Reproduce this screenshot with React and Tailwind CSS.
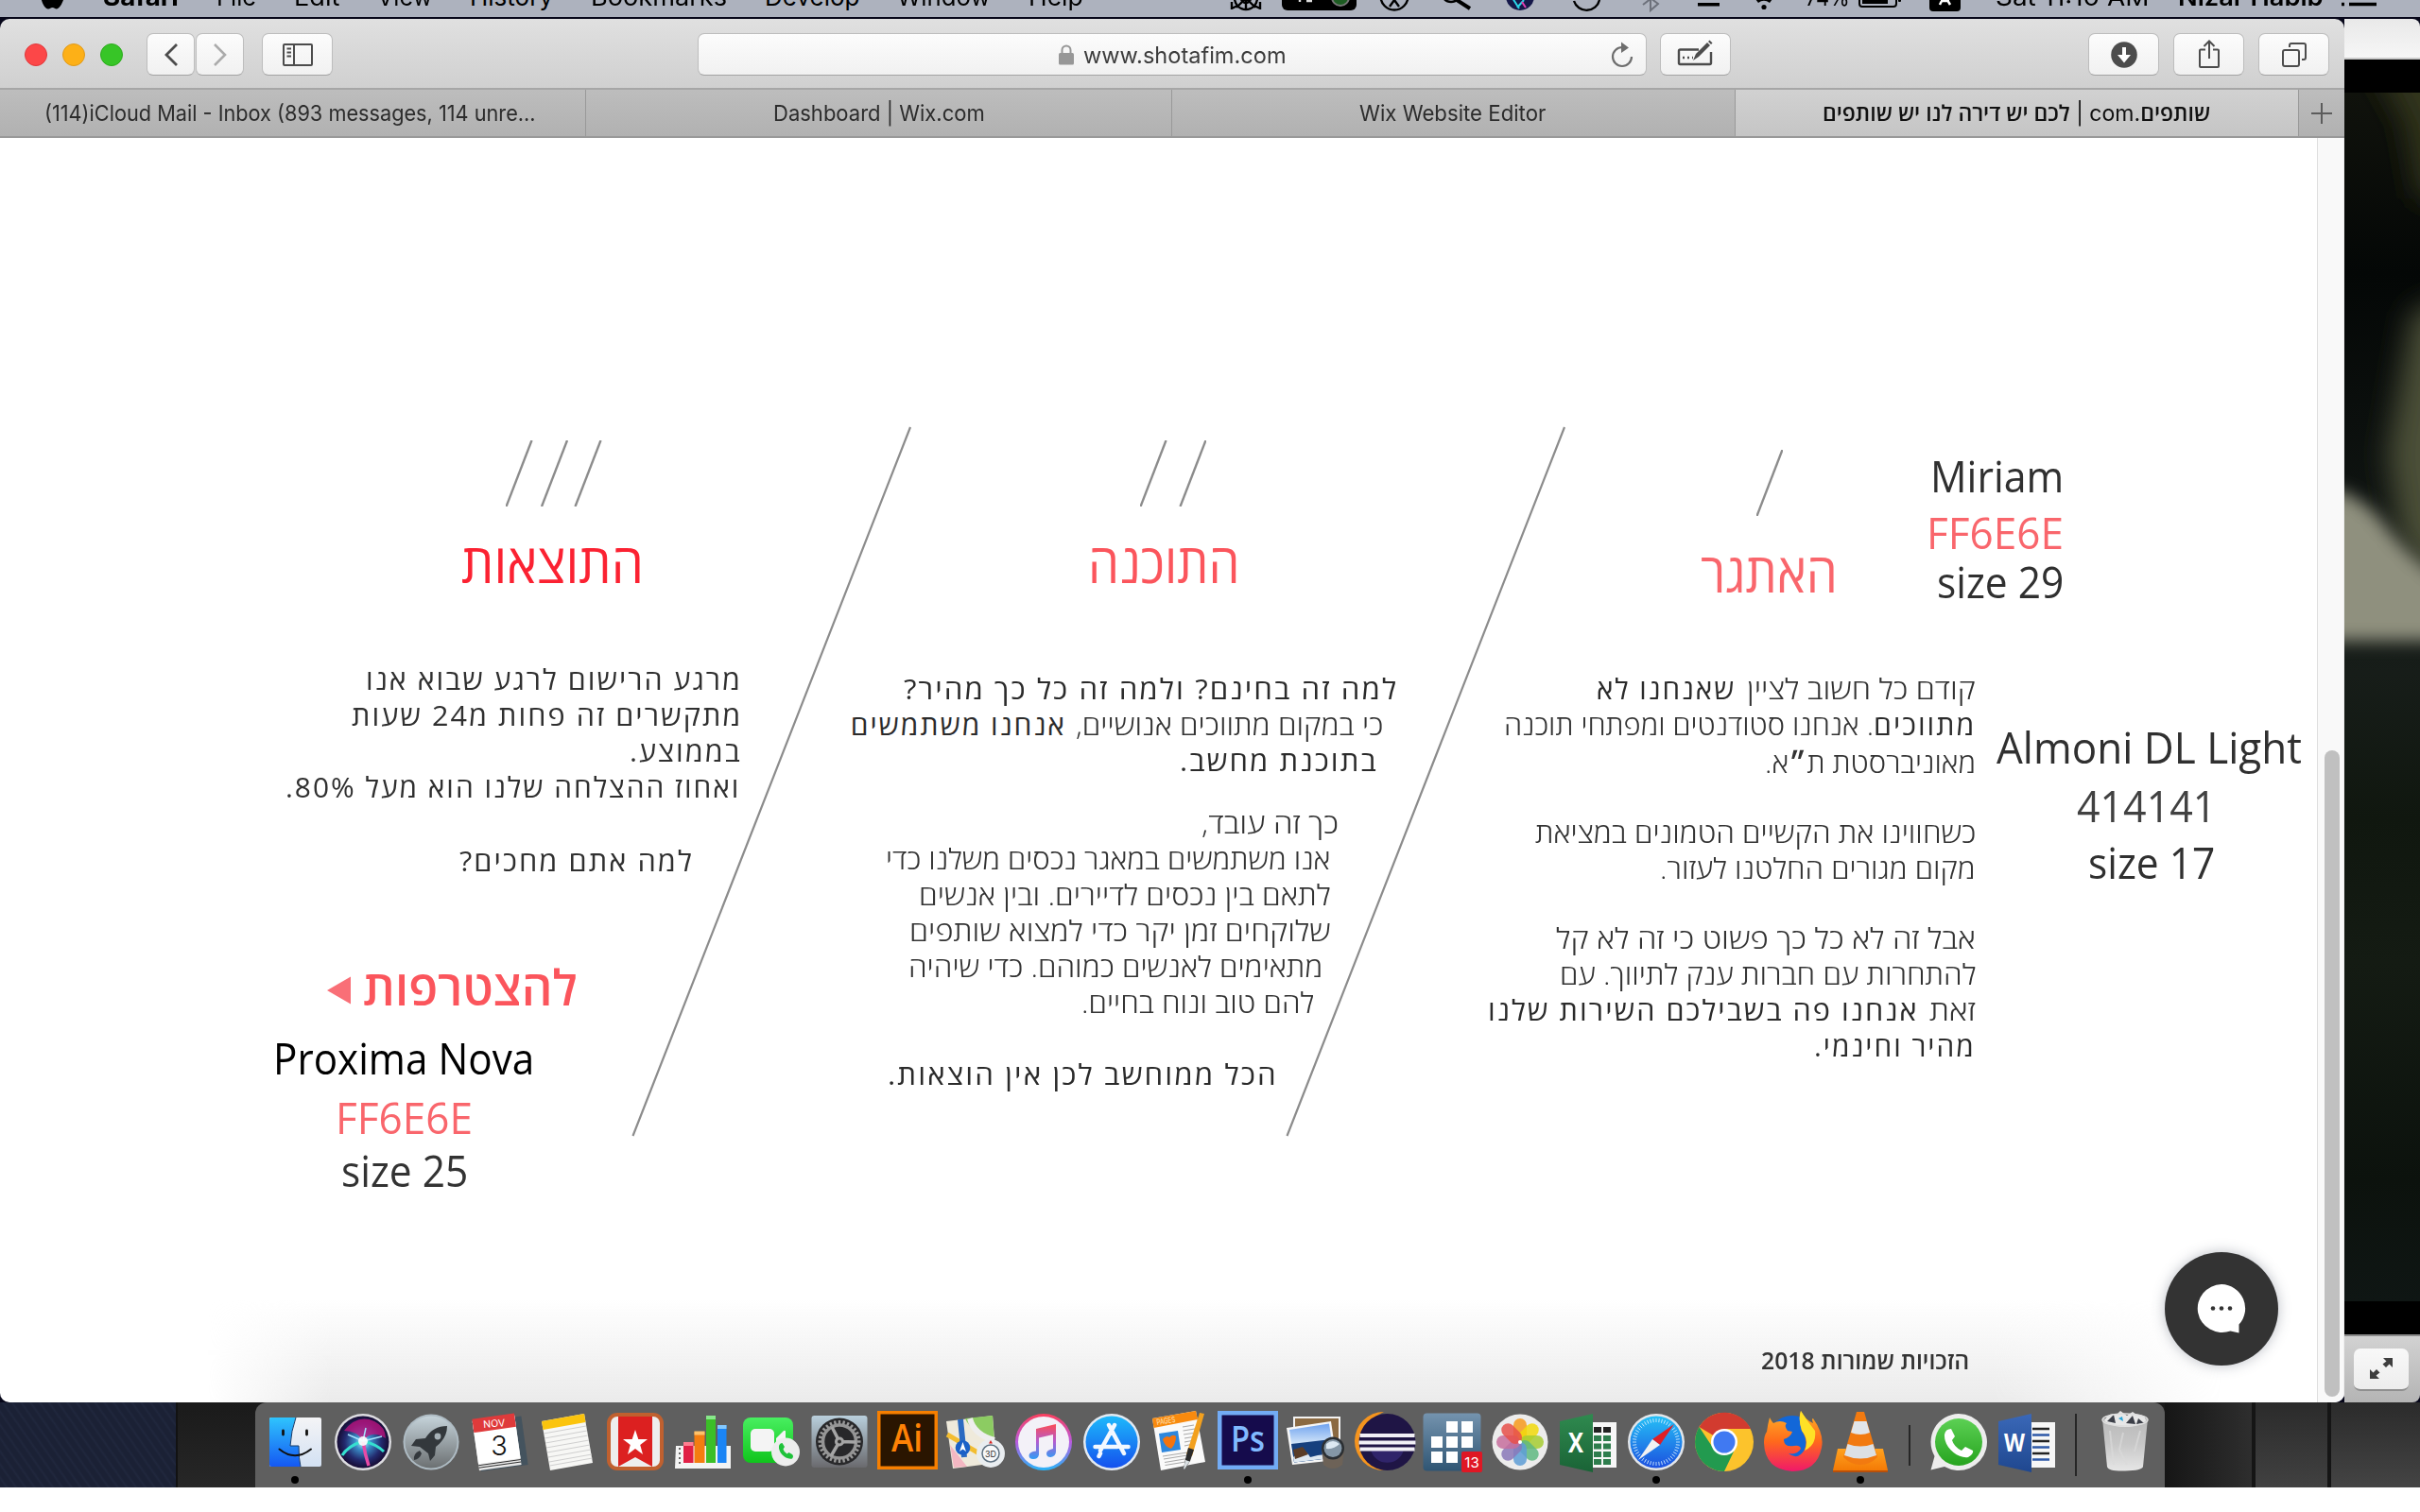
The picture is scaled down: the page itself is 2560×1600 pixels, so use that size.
import React, { useLayoutEffect, useRef } from "react";

/* Text that is stretched or squeezed to fill the width of its box. */
function Fit({ className = "", rtl = false, children }) {
  const box = useRef(null);
  const inner = useRef(null);
  useLayoutEffect(() => {
    const fit = () => {
      const b = box.current;
      const s = inner.current;
      if (!b || !s || !s.offsetWidth) return;
      s.style.transform = `scaleX(${b.clientWidth / s.offsetWidth})`;
    };
    fit();
    document.fonts?.ready.then(fit);
  }, []);
  return (
    <div ref={box} dir={rtl ? "rtl" : "ltr"} className={`shrink-0 whitespace-nowrap ${className}`}>
      <span ref={inner} className={`inline-block ${rtl ? "origin-right" : "origin-left"}`}>
        {children}
      </span>
    </div>
  );
}

const UI = "font-['Inter',sans-serif]";
const HE = "font-['Open_Sans','Liberation_Sans',sans-serif]";

/* ---------- menu bar ---------- */
function MenuBar() {
  const item = "-mt-[15px] h-6 text-[26px] leading-6 text-black";
  return (
    <div className={`flex h-[18px] items-start overflow-hidden bg-[#adb2be] ${UI}`}>
      <svg className="ml-[43px] h-[18px] w-6 shrink-0" viewBox="0 0 24 18">
        <path d="M0 -8C0 2 4 9 8 9.500C10 9.500 10.500 8 12.500 8S15 9.500 17 9.500C20 9 22.500 4 24 0L22 -8Z" />
      </svg>
      <div className="ml-[42px] flex gap-10">
        <Fit className={`${item} w-[80px] font-bold`}>Safari</Fit>
        <Fit className={`${item} w-[42px]`}>File</Fit>
        <Fit className={`${item} w-[48px]`}>Edit</Fit>
        <Fit className={`${item} w-[58px]`}>View</Fit>
        <Fit className={`${item} w-[88px]`}>History</Fit>
        <Fit className={`${item} w-[144px]`}>Bookmarks</Fit>
        <Fit className={`${item} w-[100px]`}>Develop</Fit>
        <Fit className={`${item} w-[99px]`}>Window</Fit>
        <Fit className={`${item} w-[58px]`}>Help</Fit>
      </div>
      <svg className="ml-[154px] h-[18px] w-[534px] shrink-0" viewBox="1300 0 534 18" fill="none" stroke="#000" strokeWidth="2.400">
        <circle cx="1318" cy="-2" r="12" />
        <circle cx="1318" cy="-2" r="5" />
        <path d="M1318 -2L1308 8M1318 -2L1328 8M1318 -2V10M1303 2V10M1333 2V10M1303 9L1309 6M1333 9L1327 6" />
        <rect x="1356" y="-20" width="79" height="31" rx="6" fill="#000" stroke="none" />
        <circle cx="1418" cy="-3" r="9" fill="#1d5c22" stroke="#777" strokeWidth="2" />
        <path d="M1375 -3V2M1382 1H1388" stroke="#ddd" />
        <circle cx="1475" cy="-4" r="14.500" />
        <path d="M1475 -4V0L1470 7M1475 0L1480 7" />
        <path d="M1538 -2L1555 9" strokeWidth="4" />
        <circle cx="1535" cy="-8" r="10" />
        <circle cx="1608" cy="-4" r="15" fill="#15184a" stroke="none" />
        <path d="M1600 -2L1607 9M1612 0L1605 8" stroke="#2ad5e8" strokeWidth="2" />
        <path d="M1610 2L1614 8" stroke="#e33fb0" strokeWidth="2" />
        <path d="M1665 1A14 14 0 0 0 1692 0" />
        <path d="M1678 -3H1684" strokeWidth="2" />
        <path d="M1738 5L1755 -8M1738 -8L1754 4L1746 11V-10" stroke="#6d717b" strokeWidth="2" />
        <rect x="1796" y="3" width="23" height="3.500" fill="#000" stroke="none" />
        <path d="M1795 -1H1820L1808 -12Z" fill="#000" stroke="none" />
      </svg>
      <svg className="h-[18px] w-[76px] shrink-0" viewBox="1834 0 76 18">
        <circle cx="1866" cy="7.500" r="2.600" />
        <path d="M1857 -1A13 13 0 0 1 1875 -1L1872 3A10 10 0 0 0 1860 3Z" />
      </svg>
      <Fit className={`${item} w-[47px]`}>74%</Fit>
      <svg className="h-[18px] w-[154px] shrink-0" viewBox="1957 0 154 18">
        <rect x="1967" y="-10" width="39" height="17" rx="3" fill="none" stroke="#000" strokeWidth="2" />
        <rect x="1970" y="-8" width="27" height="12" />
        <rect x="2008" y="-6" width="3" height="8" rx="1" />
        <rect x="2041" y="-18" width="33" height="30" rx="4" />
        <path d="M2052 5L2057 -5L2063 5M2053 1H2062" stroke="#fff" strokeWidth="2.500" fill="none" />
      </svg>
      <Fit className={`${item} w-[162px]`}>Sat 11:10 AM</Fit>
      <Fit className={`${item} ml-[31px] w-[154px] font-semibold`}>Nizar Habib</Fit>
      <svg className="ml-[19px] h-[18px] w-[38px] shrink-0" viewBox="0 0 38 18">
        <path d="M0 4.500H3M8 4.500H37M0 -3H3M8 -3H37" stroke="#000" strokeWidth="3.500" />
      </svg>
    </div>
  );
}

/* ---------- browser chrome ---------- */
const BTN =
  "flex h-[45px] items-center justify-center rounded-[7px] border border-[#bdbdbd] border-b-[#a3a3a3] bg-gradient-to-b from-[#fcfcfc] to-[#f1f1f1]";

function Toolbar() {
  return (
    <div className="flex h-[75px] items-start rounded-t-[10px] border-b-2 border-[#a6a6a6] bg-gradient-to-b from-[#e0e0e0] to-[#d0d0d0] pt-[15px]">
      <div className="ml-[26px] mt-[11px] flex gap-4">
        <div className="size-6 rounded-full border border-[#e0383b] bg-[#fc4748]" />
        <div className="size-6 rounded-full border border-[#e09a1a] bg-[#fdb017]" />
        <div className="size-6 rounded-full border border-[#2bab1c] bg-[#37c527]" />
      </div>
      <div className={`ml-[25px] w-[51px] ${BTN}`}>
        <svg className="h-6 w-4" viewBox="0 0 16 24" fill="none" stroke="#4c4c4c" strokeWidth="2.800">
          <path d="M14 1L3 12L14 23" />
        </svg>
      </div>
      <div className={`ml-px w-[51px] ${BTN}`}>
        <svg className="h-6 w-4" viewBox="0 0 16 24" fill="none" stroke="#ababab" strokeWidth="2.600">
          <path d="M2 1L13 12L2 23" />
        </svg>
      </div>
      <div className={`ml-[19px] w-[75px] ${BTN}`}>
        <svg className="h-6 w-8" viewBox="0 0 32 24" fill="none" stroke="#4c4c4c" strokeWidth="2">
          <rect x="1" y="1" width="30" height="22" rx="1" />
          <path d="M12 1V23M4.500 5.500H9M4.500 9.500H9M4.500 13.500H9" />
        </svg>
      </div>
      <div className={`ml-[386px] w-[1004px] ${BTN} !justify-start`}>
        <svg className="ml-[380px] h-[22px] w-[18px]" viewBox="0 0 18 22">
          <rect x="1" y="9" width="16" height="12.500" rx="1.500" fill="#979797" />
          <path d="M4.500 10V6A4.500 4.500 0 0 1 13.500 6V10" fill="none" stroke="#979797" strokeWidth="2" />
        </svg>
        <Fit className={`ml-[9px] mt-[2px] w-[215px] text-[24px] leading-8 text-[#3c3c3c] ${UI}`}>www.shotafim.com</Fit>
        <svg className="ml-[343px] h-7 w-6" viewBox="0 0 24 28" fill="none" stroke="#6e6e6e" strokeWidth="2.200">
          <path d="M12 6A10 10 0 1 0 22 16" />
          <path d="M11 0.500L19 6.500L11 12Z" fill="#6e6e6e" stroke="none" />
        </svg>
      </div>
      <div className={`ml-[14px] w-[75px] ${BTN}`}>
        <svg className="-mt-1 h-7 w-10" viewBox="0 0 40 28" fill="none" stroke="#4c4c4c" strokeWidth="2.400">
          <path d="M23 10.500H3.500Q2 10.500 2 12V24.500Q2 26 3.500 26H34.500Q36 26 36 24.500V13" />
          <path d="M6 19H8M11 19H13M16 19H17" />
          <path d="M17 22L20 15L32 3L35 6L23 18Z" fill="#4c4c4c" stroke="none" />
          <path d="M33 2L34.500 0.500L37.500 3.500L36 5Z" fill="#4c4c4c" stroke="none" />
        </svg>
      </div>
      <div className="ml-auto mr-4 flex gap-[15px]">
        <div className={`w-[75px] ${BTN}`}>
          <svg className="size-7" viewBox="0 0 28 28">
            <circle cx="14" cy="14" r="13.800" fill="#4c4c4c" />
            <path d="M12 6H16V14H21L14 22.500L7 14H12Z" fill="#fff" />
          </svg>
        </div>
        <div className={`w-[75px] ${BTN}`}>
          <svg className="-mt-0.5 h-[30px] w-6" viewBox="0 0 24 30" fill="none" stroke="#4c4c4c" strokeWidth="2">
            <path d="M8 10.500H3Q2 10.500 2 11.500V28Q2 29 3 29H21Q22 29 22 28V11.500Q22 10.500 21 10.500H16M12 20V2M6.500 7L12 1.500L17.500 7" />
          </svg>
        </div>
        <div className={`w-[75px] ${BTN}`}>
          <svg className="h-[26px] w-7" viewBox="0 0 28 26" fill="none" stroke="#4c4c4c" strokeWidth="2">
            <rect x="2" y="8" width="17" height="17" rx="2" />
            <path d="M9 5V3Q9 1 11 1H24Q26 1 26 3V16Q26 18 24 18H22" />
          </svg>
        </div>
      </div>
    </div>
  );
}

function Tabs() {
  const tab = "flex h-[51px] items-center justify-center border-b-2 border-b-[#999] bg-gradient-to-b from-[#bdbdbd] to-[#b1b1b1] text-[23px] leading-8 text-[#2c2c2c]";
  return (
    <div className={`flex ${UI}`}>
      <div className={`${tab} w-[620px] border-r border-r-[#999] pr-1.5`}>
        <Fit className="w-[520px]">(114)iCloud Mail - Inbox (893 messages, 114 unre...</Fit>
      </div>
      <div className={`${tab} w-[620px] border-r border-r-[#999]`}>
        <Fit className="w-[224px]">Dashboard | Wix.com</Fit>
      </div>
      <div className={`${tab} w-[595px] pr-0.5`}>
        <Fit className="w-[197px]">Wix Website Editor</Fit>
      </div>
      <div className="flex h-[51px] w-[597px] items-center justify-center border-x border-b-2 border-x-[#999] border-b-[#999] bg-gradient-to-b from-[#d1d1d1] to-[#c5c5c5] text-[23px] leading-8 text-[#111]">
        <Fit rtl className="w-[410px] font-['Open_Sans',sans-serif] font-semibold">
          שותפים<span className="font-['Inter',sans-serif] font-normal">.com | </span>לכם יש דירה לנו יש שותפים
        </Fit>
      </div>
      <div className={`${tab} w-[48px]`}>
        <svg className="size-[22px]" viewBox="0 0 22 22" stroke="#5c5c5c" strokeWidth="2">
          <path d="M11 0V22M0 11H22" />
        </svg>
      </div>
    </div>
  );
}

/* ---------- page ---------- */
const BODY = `h-[38px] leading-[38px] ${HE}`;
const LIGHT = "text-[30px] font-light text-[#333]";
const REG = "text-[30px] font-normal tracking-[2px] text-[#303030]";
const BOLD = "text-[30px] font-medium tracking-[2px] text-[#2b2b2b]";
const HEAD = `h-[60px] text-[58px] font-medium leading-[60px] ${HE}`;
const NOTE = "font-['Open_Sans',sans-serif] text-[45px] font-normal leading-[52px] h-[52px]";

function Slashes({ className, xs, w }) {
  return (
    <svg className={`h-[70px] shrink-0 ${className}`} viewBox={`0 0 ${w} 70`} stroke="#8c8c8c" strokeWidth="2.400">
      {xs.map((x) => (
        <line key={x} x1={x + 27} y1="0" x2={x} y2="70" />
      ))}
    </svg>
  );
}

function Results() {
  return (
    <section className="flex w-[785px] flex-col items-end">
      <Slashes className="mr-[148px] mt-[320px] w-[102px]" w={102} xs={[0.5, 38, 73.5]} />
      <Fit rtl className={`${HEAD} mr-[104px] mt-[29px] w-[193px] text-[#fb2232]`}>התוצאות</Fit>
      <Fit rtl className={`${BODY} ${REG} mt-[75px] w-[398px]`}>מרגע הרישום לרגע שבוא אנו</Fit>
      <Fit rtl className={`${BODY} ${REG} w-[413px]`}>מתקשרים זה פחות מ24 שעות</Fit>
      <Fit rtl className={`${BODY} ${REG} w-[119px]`}>בממוצע.</Fit>
      <Fit rtl className={`${BODY} ${REG} mr-[2px] w-[481px]`}>ואחוז ההצלחה שלנו הוא מעל 80%.</Fit>
      <Fit rtl className={`${BODY} ${REG} mr-[51px] mt-[40px] w-[248px]`}>למה אתם מחכים?</Fit>
      <div className="mr-[174px] mt-[84px] flex items-center">
        <svg className="mr-3 mt-2 h-[30px] w-[26px]" viewBox="0 0 26 30">
          <path d="M0 15L25 0.500V29.500Z" fill="#f96f77" />
        </svg>
        <Fit rtl className={`h-[60px] w-[227px] text-[52px] font-semibold leading-[60px] text-[#fb555c] ${HE}`}>להצטרפות</Fit>
      </div>
      <Fit className={`${NOTE} mr-[220px] mt-[20px] w-[276px] text-black`}>Proxima Nova</Fit>
      <Fit className={`${NOTE} mr-[285px] mt-[11px] w-[145px] text-[#f9666c]`}>FF6E6E</Fit>
      <Fit className={`${NOTE} mr-[290px] mt-[4px] w-[134px] text-[#333]`}>size 25</Fit>
    </section>
  );
}

function Software() {
  return (
    <section className="flex w-[694px] flex-col items-end">
      <Slashes className="mr-[203px] mt-[320px] w-[70px]" w={70} xs={[0.5, 42.5]} />
      <Fit rtl className={`${HEAD} mr-[168px] mt-[29px] w-[160px] text-[#fb555c]`}>התוכנה</Fit>
      <Fit rtl className={`${BODY} ${BOLD} mt-[85px] w-[523px]`}>למה זה בחינם? ולמה זה כל כך מהיר?</Fit>
      <div dir="rtl" className="mr-[16px] flex gap-[10px]">
        <Fit rtl className={`${BODY} ${LIGHT} w-[325px]`}>כי במקום מתווכים אנושיים,</Fit>
        <Fit rtl className={`${BODY} ${BOLD} w-[228px]`}>אנחנו משתמשים</Fit>
      </div>
      <Fit rtl className={`${BODY} ${BOLD} mr-[21px] w-[210px]`}>בתוכנת מחשב.</Fit>
      <Fit rtl className={`${BODY} ${LIGHT} mr-[63px] mt-[28px] w-[145px]`}>כך זה עובד,</Fit>
      <Fit rtl className={`${BODY} ${LIGHT} mr-[72px] w-[470px]`}>אנו משתמשים במאגר נכסים משלנו כדי</Fit>
      <Fit rtl className={`${BODY} ${LIGHT} mr-[71px] w-[436px]`}>לתאם בין נכסים לדיירים. ובין אנשים</Fit>
      <Fit rtl className={`${BODY} ${LIGHT} mr-[71px] w-[446px]`}>שלוקחים זמן יקר כדי למצוא שותפים</Fit>
      <Fit rtl className={`${BODY} ${LIGHT} mr-[80px] w-[438px]`}>מתאימים לאנשים כמוהם. כדי שיהיה</Fit>
      <Fit rtl className={`${BODY} ${LIGHT} mr-[89px] w-[246px]`}>להם טוב ונוח בחיים.</Fit>
      <Fit rtl className={`${BODY} ${BOLD} mr-[127px] mt-[38px] w-[413px]`}>הכל ממוחשב לכן אין הוצאות.</Fit>
    </section>
  );
}

function Challenge() {
  return (
    <section className="flex w-[611px] flex-col items-end">
      <Slashes className="mr-[204px] mt-[330px] w-[28px]" w={28} xs={[0.5]} />
      <Fit rtl className={`${HEAD} mr-[146px] mt-[29px] w-[145px] !font-normal text-[#f9666c]`}>האתגר</Fit>
      <div dir="rtl" className="mt-[75px] flex gap-[12px]">
        <Fit rtl className={`${BODY} ${LIGHT} w-[242px]`}>קודם כל חשוב לציין</Fit>
        <Fit rtl className={`${BODY} ${BOLD} w-[147px]`}>שאנחנו לא</Fit>
      </div>
      <div dir="rtl" className="flex">
        <Fit rtl className={`${BODY} ${BOLD} w-[108px]`}>מתווכים</Fit>
        <Fit rtl className={`${BODY} ${LIGHT} w-[391px]`}>. אנחנו סטודנטים ומפתחי תוכנה</Fit>
      </div>
      <Fit rtl className={`${BODY} ${LIGHT} mt-[2px] w-[223px]`}>
        מאוניברסטת ת<span className="font-bold">״</span>א.
      </Fit>
      <Fit rtl className={`${BODY} ${LIGHT} mt-[36px] w-[466px]`}>כשחווינו את הקשיים הטמונים במציאת</Fit>
      <Fit rtl className={`${BODY} ${LIGHT} w-[334px]`}>מקום מגורים החלטנו לעזור.</Fit>
      <Fit rtl className={`${BODY} ${LIGHT} mt-[36px] w-[444px]`}>אבל זה לא כל כך פשוט כי זה לא קל</Fit>
      <Fit rtl className={`${BODY} ${LIGHT} w-[440px]`}>להתחרות עם חברות ענק לתיווך. עם</Fit>
      <div dir="rtl" className="flex gap-[12px]">
        <Fit rtl className={`${BODY} ${LIGHT} w-[49px]`}>זאת</Fit>
        <Fit rtl className={`${BODY} ${BOLD} w-[455px]`}>אנחנו פה בשבילכם השירות שלנו</Fit>
      </div>
      <Fit rtl className={`${BODY} ${BOLD} w-[171px]`}>מהיר וחינמי.</Fit>
      <Fit rtl className={`mr-[7px] mt-[297px] h-8 w-[220px] text-[25px] font-semibold leading-8 text-[#333] ${HE}`}>הזכויות שמורות 2018</Fit>
    </section>
  );
}

function Notes() {
  return (
    <section className="flex w-[361px] flex-col items-end">
      <div className="-ml-[50px] mr-[268px] mt-[332px] flex flex-col items-end">
        <Fit className={`${NOTE} w-[141px] text-[#303030]`}>Miriam</Fit>
        <Fit className={`${NOTE} mt-[8px] w-[145px] text-[#f9666c]`}>FF6E6E</Fit>
        <Fit className={`${NOTE} w-[134px] text-[#303030]`}>size 29</Fit>
      </div>
      <div className="mr-[16px] mt-[123px] flex flex-col items-center">
        <Fit className={`${NOTE} w-[323px] text-[#303030]`}>Almoni DL Light</Fit>
        <Fit className={`${NOTE} -ml-[6px] mt-[10px] w-[147px] text-[#414141]`}>414141</Fit>
        <Fit className={`${NOTE} ml-[5px] mt-[8px] w-[134px] text-[#303030]`}>size 17</Fit>
      </div>
      <div className="mr-[41px] mt-[386px] flex size-[120px] items-center justify-center rounded-full bg-[#333] shadow-[0_0_14px_rgba(60,70,90,0.35)]">
        <svg className="size-[54px]" viewBox="0 0 54 54">
          <path d="M27 1A26 25.500 0 1 0 36.500 50.500L45.500 52.500V43.500A26 25.500 0 0 0 27 1Z" fill="#fff" />
          <circle cx="18" cy="26.500" r="2.300" fill="#333" />
          <circle cx="27" cy="26.500" r="2.300" fill="#333" />
          <circle cx="36" cy="26.500" r="2.300" fill="#333" />
        </svg>
      </div>
    </section>
  );
}

function Page() {
  return (
    <div className="relative flex h-[1338px] overflow-hidden rounded-b-[10px] bg-white">
      <div className="absolute bottom-0 left-[220px] h-[110px] w-[2130px] bg-gradient-to-t from-[#ebebeb] to-transparent [mask-image:linear-gradient(90deg,transparent,black_130px,black_1890px,transparent)]" />
      <svg className="absolute left-0 top-0 h-[1338px] w-[2450px]" viewBox="0 146 2450 1338" stroke="#8c8c8c" strokeWidth="2.200">
        <path d="M963 452L669.500 1202M1655 452L1361.500 1202" />
      </svg>
      <div className="relative flex w-[2451px] items-start">
        <Results />
        <Software />
        <Challenge />
        <Notes />
      </div>
      <div className="relative w-[29px] border-x border-[#dedede] border-r-[#eee] bg-[#f9f9f9] pl-[7px] pt-[648px]">
        <div className="h-[684px] w-4 rounded-full bg-[#c0c0c0]" />
      </div>
    </div>
  );
}

/* ---------- window behind the browser ---------- */
function VideoWindow() {
  return (
    <div className="flex w-[80px] flex-col overflow-hidden rounded-br-[8px] rounded-tr-[8px]">
      <div className="h-[43px] border-b-2 border-[#c9c9c9] bg-gradient-to-b from-[#e9e9e9] to-[#f6f6f6]" />
      <div className="h-[35px] bg-black" />
      <svg className="h-[1279px] w-[80px]" viewBox="0 98 80 1279" preserveAspectRatio="none">
        <defs>
          <linearGradient id="vbg" x1="0" y1="0" x2="0" y2="1">
            <stop offset="0" stopColor="#10120c" />
            <stop offset="0.150" stopColor="#040706" />
            <stop offset="0.480" stopColor="#171d19" />
            <stop offset="0.600" stopColor="#10170f" />
            <stop offset="0.720" stopColor="#141b13" />
            <stop offset="0.900" stopColor="#0c120d" />
            <stop offset="1" stopColor="#0f1614" />
          </linearGradient>
          <filter id="vb" x="-60%" y="-50%" width="220%" height="200%">
            <feGaussianBlur stdDeviation="15" />
          </filter>
          <filter id="vs" x="-50%" y="-50%" width="200%" height="200%">
            <feGaussianBlur stdDeviation="9" />
          </filter>
        </defs>
        <rect y="98" width="80" height="1279" fill="url(#vbg)" />
        <path d="M25 60H120V210H78L64 130Z" fill="#33361f" filter="url(#vb)" />
        <path d="M72 330L130 310V660L60 570L46 480Z" fill="#4b5037" filter="url(#vb)" />
        <path d="M-30 515Q15 518 42 555T120 625V678H-30Z" fill="#8f907e" filter="url(#vs)" />
      </svg>
      <div className="h-[35px] bg-black" />
      <div className="flex h-[72px] items-center border-t-2 border-[#8b8b8b] bg-gradient-to-b from-[#d2d2d2] to-[#b4b4b4] pl-[10px]">
        <div className="flex h-[45px] w-[58px] items-center justify-center rounded-[7px] border-b-2 border-[#8f8f8f] bg-gradient-to-b from-[#f8f8f8] to-[#ededed]">
          <svg className="size-6" viewBox="0 0 24 24" fill="#3e3e3e">
            <path d="M14 1H24V11L20.500 7.500L17 11L13.500 7.500L17.500 4.500Z" />
            <path d="M10 23H0V13L3.500 16.500L7 13L10.500 16.500L6.500 19.500Z" />
          </svg>
        </div>
      </div>
    </div>
  );
}

/* ---------- dock ---------- */
function Icon({ running, children }) {
  return (
    <svg className="h-[90px] w-[72px] shrink-0" viewBox="0 0 72 90">
      {children}
      {running && <circle cx="36" cy="82" r="4" fill="#000" />}
    </svg>
  );
}

function Grad({ id, a, b, m }) {
  return (
    <linearGradient id={id} x1="0" y1="0" x2="0" y2="1">
      <stop offset="0" stopColor={a} />
      {m && <stop offset="0.500" stopColor={m} />}
      <stop offset="1" stopColor={b} />
    </linearGradient>
  );
}

const PETALS = ["#f79a1d", "#f2d90c", "#a7cd32", "#5fb881", "#5e9ed6", "#8a78b8", "#c76f9e", "#e8504a"];
const TICKS = Array.from({ length: 48 }, (_, i) => i * 7.5);
const TEETH = Array.from({ length: 28 }, (_, i) => (i * 360) / 28);

function Dock() {
  return (
    <div className="flex h-[90px] w-[2020px] rounded-t-[12px] bg-[#5f5f5f] pl-1.5">
      <svg className="absolute size-0">
        <defs>
          <Grad id="fin" a="#2fc4fd" b="#1558f3" />
          <Grad id="finr" a="#f4f4f6" b="#d3e1f3" />
          <Grad id="gray" a="#c5d3da" b="#6c7072" />
          <Grad id="sys" a="#b9cfdc" b="#6a6a6e" />
          <Grad id="green" a="#48ef60" b="#10c41c" />
          <Grad id="itn" a="#fb3f5c" m="#b95be0" b="#28b5f8" />
          <Grad id="note" a="#fb4d55" m="#b35bd0" b="#2f9df5" />
          <Grad id="store" a="#1db9fb" b="#1450ee" />
          <Grad id="grid" a="#7493ae" b="#2f5573" />
          <Grad id="saf" a="#25c0f6" b="#1c50df" />
          <Grad id="wa" a="#5cd054" b="#27a41f" />
          <Grad id="trash" a="#b9b9b9" m="#c8c8c8" b="#e6e6e6" />
          <Grad id="sea" a="#6fa2ef" m="#cfe3f8" b="#12477f" />
          <Grad id="wd" a="#3a68b8" b="#1f478f" />
          <Grad id="xl" a="#2f8a4f" b="#1a6336" />
          <Grad id="cone" a="#ffa21f" b="#f47a05" />
          <Grad id="fx" a="#ffb425" m="#ff6a1b" b="#f0186a" />
          <radialGradient id="siri">
            <stop offset="0" stopColor="#c9fff8" />
            <stop offset="0.300" stopColor="#3a8fc9" />
            <stop offset="0.700" stopColor="#232a6e" />
            <stop offset="1" stopColor="#160b33" />
          </radialGradient>
        </defs>
      </svg>

      {/* Finder */}
      <Icon running>
        <rect x="9" y="16" width="55" height="52" rx="2" fill="url(#finr)" />
        <path d="M11 16H37Q32 30 31 46H40Q40 60 42 68H11Q9 68 9 66V18Q9 16 11 16Z" fill="url(#fin)" />
        <path d="M37 16Q32 30 31 46H40Q40 60 42 68" fill="none" stroke="#173a66" strokeWidth="1" />
        <path d="M23.500 30V34M48.500 30V34" stroke="#111" strokeWidth="2.800" strokeLinecap="round" />
        <path d="M19.500 49.500Q36 63 53 49.500" fill="none" stroke="#111" strokeWidth="2" strokeLinecap="round" />
      </Icon>
      {/* Siri */}
      <Icon>
        <circle cx="36" cy="42" r="30" fill="#dcdce0" />
        <circle cx="36" cy="42" r="27.500" fill="url(#siri)" />
        <path d="M16 30Q30 12 48 20Q60 26 60 38Q45 28 36 41Q30 30 16 30Z" fill="#c4127f" opacity="0.750" />
        <path d="M36 41Q20 46 14 56M36 41Q50 44 58 52" stroke="#35e0d0" strokeWidth="3" fill="none" />
        <path d="M36 41Q38 55 42 67" stroke="#e84aa6" strokeWidth="3.500" fill="none" />
        <path d="M36 41L39 27M36 41L56 36M36 41L20 34" stroke="#a6e4ff" strokeWidth="1.500" />
        <circle cx="36" cy="41" r="5" fill="#fff" opacity="0.900" />
      </Icon>
      {/* Launchpad */}
      <Icon>
        <circle cx="36" cy="42" r="29.500" fill="#aebbc3" />
        <circle cx="36" cy="42" r="27.500" fill="url(#gray)" />
        <path d="M53 25Q38 25 30 38L20 39L15 46L24 47L33 54L35 62L40 56L41 47Q53 38 53 25Z" fill="#33383c" />
        <circle cx="43" cy="36" r="3.400" fill="#a7b2b8" />
        <path d="M24 51Q17 54 18 61Q24 60 26 54Z" fill="#33383c" />
      </Icon>
      {/* Calendar */}
      <Icon>
        <g transform="rotate(-8 36 42)">
          <rect x="13" y="18" width="50" height="52" fill="#44535e" />
          <rect x="11" y="17" width="45" height="52" fill="#e8e8e8" />
          <path d="M11 66H56M11 63.500H56" stroke="#333" strokeWidth="1" />
          <rect x="11" y="16" width="45" height="46" fill="#fff" />
          <rect x="11" y="14" width="45" height="14.500" fill="#df3a3b" />
        </g>
        <text x="0" y="0" transform="translate(31 26) rotate(-5)" textAnchor="middle" fontSize="10.500" fill="#fff" fontFamily="Inter, sans-serif">NOV</text>
        <text x="36" y="55.500" textAnchor="middle" fontSize="29" fontWeight="300" fill="#111" fontFamily="Inter, sans-serif">3</text>
      </Icon>
      {/* Notes */}
      <Icon>
        <path d="M9 20L54 12L63 64L18 72Z" fill="#f7f7f5" />
        <path d="M9 20L54 12L55.500 21L10.500 29Z" fill="#fbc40d" />
        <path d="M11 33L56 25M12 38L57 30M13 43L58 35M14 48L59 40M15 53L60 45M16 58L61 50M17 63L62 55M17.500 67L62.500 59" stroke="#cfcfcf" strokeWidth="1" />
      </Icon>
      {/* Wunderlist */}
      <Icon>
        <rect x="6" y="11" width="60" height="61" rx="11" fill="#c0602f" />
        <rect x="10" y="15" width="52" height="53" rx="7" fill="#eee" />
        <path d="M18 15H54V68L36 58L18 68Z" fill="#dc2020" />
        <path d="M36 29L39.300 39H49L41.200 45L44 55L36 49L28 55L30.800 45L23 39H32.700Z" fill="#fff" />
      </Icon>
      {/* Numbers */}
      <Icon>
        <path d="M7 46H65V70H6Z" fill="#f3f3f3" />
        <path d="M11 48V68" stroke="#666" strokeWidth="2" strokeDasharray="2 3" />
        <rect x="15" y="42" width="10.500" height="22" fill="#e01f45" />
        <rect x="26.500" y="31" width="11" height="33" fill="#f47d10" />
        <rect x="39" y="14" width="10" height="50" fill="#3bbf28" />
        <rect x="51" y="24" width="9.500" height="40" fill="#1b85f5" />
        <path d="M15 44H25.500" stroke="#ff7d90" strokeWidth="4" />
        <path d="M26.500 32.500H37.500" stroke="#ffc26a" strokeWidth="4" />
        <path d="M39 16H49" stroke="#88e88a" strokeWidth="4" />
        <path d="M51 26H60.500" stroke="#83c8ff" strokeWidth="4" />
      </Icon>
      {/* FaceTime */}
      <Icon>
        <rect x="6" y="16" width="53" height="48" rx="8" fill="url(#green)" />
        <rect x="14" y="28" width="25" height="24" rx="5" fill="#f4f4f4" />
        <path d="M41 38L49 30Q51 29 51 31V48L41 43Z" fill="#f4f4f4" />
        <circle cx="51" cy="52.500" r="15" fill="#ededed" />
        <path d="M44 46C43 53 51 61 58 59.500Q60 57 58 55L54.500 53L52.500 54.500Q49 52 48.500 49.500L50 47L47.500 43Q45 43 44 46Z" fill="#1fc23a" />
      </Icon>
      {/* System Preferences */}
      <Icon>
        <rect x="6.500" y="14" width="59" height="55" rx="3" fill="url(#sys)" />
        <circle cx="36" cy="41.500" r="25" fill="#28282a" />
        {TEETH.map((a) => (
          <rect key={a} x="34.800" y="19" width="2.400" height="5" fill="#9a9a9a" transform={`rotate(${a} 36 41.500)`} />
        ))}
        <circle cx="36" cy="41.500" r="17.500" fill="none" stroke="#959595" strokeWidth="3.500" />
        <path d="M36 41.500L28 26M36 41.500L54 42M36 41.500L27 57" stroke="#a5a5a5" strokeWidth="3.500" />
        <circle cx="36" cy="41.500" r="5" fill="#a5a5a5" />
        <circle cx="36" cy="41.500" r="2" fill="#333" />
      </Icon>
      {/* Illustrator */}
      <Icon>
        <rect x="4" y="9" width="64" height="62" fill="#f77f00" />
        <rect x="7.500" y="12.500" width="57" height="55" fill="#2a1500" />
        <text x="35.500" y="52" textAnchor="middle" fontSize="40" fill="#ff8205" fontWeight="600" fontFamily="Open Sans, sans-serif" textLength="33" lengthAdjust="spacingAndGlyphs">Ai</text>
      </Icon>
      {/* Maps */}
      <Icon>
        <path d="M5 20L54 14L58 64L12 70Z" fill="#efeadb" />
        <path d="M25 17L54 14L56 42Q40 36 33 28Q27 22 25 17Z" fill="#8ccc62" />
        <path d="M30 17Q34 34 56 40" fill="none" stroke="#eee" strokeWidth="6" />
        <path d="M6 34L50 60" stroke="#f3bd30" strokeWidth="5" />
        <path d="M9 45L27 68L13 69Z" fill="#f4b7c2" />
        <path d="M20 18L24 58" stroke="#2b6ac1" strokeWidth="6" />
        <circle cx="22.500" cy="48" r="7.800" fill="#1b61c7" />
        <path d="M22.500 42L26 52L22.500 49.500L19 52Z" fill="#fff" />
        <circle cx="52" cy="54" r="15" fill="#e9edf0" />
        <circle cx="52" cy="54" r="9" fill="#f7f8f9" stroke="#5d7080" strokeWidth="1.500" />
        <path d="M52 40L54 43.500H50Z" fill="#d8221f" />
        <text x="52" y="57.500" textAnchor="middle" fontSize="9" fill="#333" fontFamily="Inter, sans-serif">3D</text>
      </Icon>
      {/* iTunes */}
      <Icon>
        <circle cx="36" cy="42" r="30" fill="url(#itn)" />
        <circle cx="36" cy="42" r="27" fill="#f3f1f8" />
        <path d="M28 28L49 23V52Q49 57 43.500 58Q39 58 39 54Q39 50.500 46 49V34L31 37.500V55.500Q30 60 25 60Q20.500 60 20.500 56Q21 52 28 51.500Z" fill="url(#note)" />
      </Icon>
      {/* App Store */}
      <Icon>
        <circle cx="36" cy="42" r="30" fill="#e3eaf2" />
        <circle cx="36" cy="42" r="27.500" fill="url(#store)" />
        <path d="M39 24L24 51M33 24L49 54M18.500 47H42M47 47H53.500M24 54L22.500 57" stroke="#f2f8ff" strokeWidth="4.500" strokeLinecap="round" fill="none" />
      </Icon>
      {/* Pages */}
      <Icon>
        <path d="M7 17L53 9L63 63L16 72Z" fill="#fafafa" />
        <path d="M7 17L53 9L55 18L8.500 27Z" fill="#f88a0e" />
        <text x="0" y="0" transform="translate(12 24) rotate(-9)" fontSize="8.500" fill="#ffe2bd" fontFamily="Inter, sans-serif" textLength="20" lengthAdjust="spacingAndGlyphs">PAGES</text>
        <path d="M14 33L34 30L37 50L17 53Z" fill="#2e87dd" />
        <path d="M18 39Q22 34 25 37Q29 33 32 36Q32 44 27 49Q20 47 18 39Z" fill="#f4740f" />
        <path d="M39 26L51 24M39.500 30L52 28M40 34L50 32.500M41 38L50 36.500M41 42L49 40.500M41 46L48 44.500M18 57L44 53M19 60L44 56M20 63.500L44 59.500M20.500 66.500L42 63" stroke="#aaa" strokeWidth="1.200" />
        <path d="M57 11L62 12L49 57L43 55Z" fill="#f2a01e" />
        <path d="M45 48L51 50L47 62L41 71L40 70L42 60Z" fill="#2c2c2c" />
        <path d="M42 61L46.500 62.500L41 71L40 70Z" fill="#d9dfe2" />
      </Icon>
      {/* Photoshop */}
      <Icon running>
        <rect x="4" y="9" width="64" height="62" fill="#72abf5" />
        <rect x="8.500" y="13.500" width="55" height="53" fill="#150b4c" />
        <text x="36" y="52" textAnchor="middle" fontSize="38" fill="#81baff" fontWeight="600" fontFamily="Open Sans, sans-serif" textLength="36" lengthAdjust="spacingAndGlyphs">Ps</text>
      </Icon>
      {/* Preview */}
      <Icon>
        <path d="M12 15H62V50H12Z" fill="#f2f2f2" />
        <path d="M14 17H60V50H14Z" fill="#8b6a42" />
        <path d="M5 27L52 20L58 61L11 66Z" fill="#f6f6f6" />
        <path d="M8 29L50 22.500L55.500 58.500L13 63.500Z" fill="url(#sea)" />
        <path d="M10 44L52.500 39L55.500 58.500L13 63.500Z" fill="#16407e" />
        <path d="M12 58Q24 46 30 58L38 56L54 54L55 58.500L13 63.500Z" fill="#dfe9f2" />
        <path d="M12 50L22 47L28 55L14 60Z" fill="#5a3d28" />
        <path d="M42 49L44 66Q54 74 64 66L66 49Z" fill="#6d6257" />
        <circle cx="54" cy="48.500" r="12" fill="#2b2f33" />
        <circle cx="54" cy="48.500" r="9.500" fill="#8496a6" />
        <path d="M47 44Q54 38 61 44Q55 50 47 49Z" fill="#dce8f2" />
      </Icon>
      {/* Eclipse */}
      <Icon>
        <path d="M36 10A31 31 0 0 0 36 72Q14 62 14 41T36 10Z" fill="#f5941e" />
        <circle cx="39.500" cy="42" r="30" fill="#1f1545" />
        <path d="M22 50A18 18 0 0 0 57 50Z" fill="#30246a" />
        <path d="M10.500 35H68.500M9.500 42.500H69.500M10.500 49.500H68.500" stroke="#f1f0f6" strokeWidth="4" />
      </Icon>
      {/* Grid launcher */}
      <Icon>
        <rect x="5.500" y="11.500" width="61" height="61" rx="4" fill="url(#grid)" />
        <path d="M30 20H42V32H30ZM46 20H58V32H46ZM14 36H26V48H14ZM30 36H42V48H30ZM46 36H58V48H46ZM14 52H26V64H14ZM30 52H42V64H30Z" fill="#fff" />
        <rect x="46" y="52" width="22" height="22" rx="2" fill="#df1724" />
        <text x="57" y="69" textAnchor="middle" fontSize="15" fill="#fff" fontFamily="Inter, sans-serif">13</text>
      </Icon>
      {/* Photos */}
      <Icon>
        <circle cx="36" cy="42" r="29.500" fill="#ececec" />
        {PETALS.map((c, i) => (
          <rect key={c} x="29" y="17" width="14" height="25" rx="7" fill={c} opacity="0.850" transform={`rotate(${i * 45} 36 42)`} />
        ))}
        <circle cx="36" cy="42" r="2" fill="#fff" />
      </Icon>
      {/* Excel */}
      <Icon>
        <rect x="36" y="21" width="30" height="48" fill="#f7f7f7" />
        <path d="M42 29H50M52 29H60" stroke="#222" strokeWidth="6" />
        <path d="M42 38H50M52 38H60M42 46.500H50M52 46.500H60M42 55H50M52 55H60M42 63H50M52 63H60" stroke="#2e7d4d" strokeWidth="6" />
        <path d="M6 20L41 12V74L6 66Z" fill="url(#xl)" />
        <text x="23" y="53" textAnchor="middle" fontSize="29" fontWeight="700" fill="#fff" fontFamily="Open Sans, sans-serif" textLength="16" lengthAdjust="spacingAndGlyphs">X</text>
      </Icon>
      {/* Safari */}
      <Icon running>
        <circle cx="36" cy="42" r="30" fill="#e3e6ea" />
        <circle cx="36" cy="42" r="27.500" fill="url(#saf)" />
        {TICKS.map((a) => (
          <path key={a} d="M36 17V21" stroke="#d8efff" strokeWidth="0.800" transform={`rotate(${a} 36 42)`} />
        ))}
        <path d="M55 23L40 45L32 39Z" fill="#df1f26" />
        <path d="M17 61L40 45L32 39Z" fill="#f1f1f1" />
      </Icon>
      {/* Chrome */}
      <Icon>
        <circle cx="36" cy="42" r="31" fill="#fcc32c" />
        <path d="M36 42L9.500 26A31 31 0 0 1 64 28H36Z" fill="#d23b2f" />
        <path d="M9.500 26A31 31 0 0 0 36 73L46 52L36 42L24 48Z" fill="#229a4f" />
        <circle cx="36" cy="42" r="14" fill="#fff" />
        <circle cx="36" cy="42" r="11.500" fill="#4079f2" />
      </Icon>
      {/* Firefox */}
      <Icon>
        <circle cx="36" cy="41" r="27" fill="#1267d8" />
        <path d="M12 16Q14 20 16 22Q23 18 30 22Q27 25 31 30L36 31Q34 37 27 39Q27 48 38 46Q44 45 45 49Q41 56 32 54Q42 62 49 50Q53 40 46 30Q42 18 45 9Q49 18 58 22Q56 17 58 17Q70 34 67 48Q62 73 36 73Q7 71 6 43Q6 35 9 31Q10 23 12 16Z" fill="url(#fx)" />
        <path d="M45 9Q42 18 46 30Q54 40 49 51Q62 45 60 30Q52 20 45 9Z" fill="#ffe126" />
      </Icon>
      {/* VLC */}
      <Icon running>
        <path d="M12 49H60L65 72H7Z" fill="url(#cone)" />
        <path d="M7 72H65V74H7Z" fill="#b9500a" />
        <path d="M32 10H40L54 58Q46 66 36 66T18 58Z" fill="#f27a10" />
        <path d="M29.500 20H42.500L46 32Q36 36 26 32Z" fill="#e2e6ea" />
        <path d="M22.500 44Q36 49 49.500 44L53 56Q36 63 19 56Z" fill="#dce0e4" />
      </Icon>

      <div className="mt-6 h-[43px] w-8 shrink-0">
        <div className="mx-auto h-full w-[2px] bg-[#262626]" />
      </div>

      {/* WhatsApp */}
      <Icon>
        <path d="M36 12A30 30 0 1 1 21 68L6.500 71.500L10.500 57A30 30 0 0 1 36 12Z" fill="#ededed" />
        <circle cx="36" cy="42" r="25" fill="url(#wa)" />
        <path d="M21 34C20 48 36 60 46 58Q52 55 51 51L43 47L39 51Q31 47 29 40L32 36L28 28Q22 28 21 34Z" fill="#fff" />
      </Icon>
      {/* Word */}
      <Icon>
        <rect x="36" y="21" width="30" height="48" fill="#f7f7f7" />
        <path d="M42 28H60M42 41H60M42 54H60" stroke="#222" strokeWidth="2.500" />
        <path d="M42 34.500H60M42 47.500H60M42 60.500H60" stroke="#2f59a8" strokeWidth="2.500" />
        <path d="M6 20L41 12V74L6 66Z" fill="url(#wd)" />
        <text x="23" y="52" textAnchor="middle" fontSize="26" fontWeight="700" fill="#fff" fontFamily="Open Sans, sans-serif" textLength="22" lengthAdjust="spacingAndGlyphs">W</text>
      </Icon>

      <div className="mt-3 h-[66px] w-8 shrink-0">
        <div className="mx-auto h-full w-[2px] bg-[#262626]" />
      </div>

      {/* Trash */}
      <Icon>
        <path d="M12 17H60L55 68Q54 72 36 72.500T17 68Z" fill="url(#trash)" />
        <path d="M14 20Q18 10 27 13L31 9L38 14L44 10L48 13Q58 12 58 20Q48 26 36 26T14 20Z" fill="#e7e7e7" />
        <path d="M17 20L24 13L26 22ZM37 22L44 14L47 23ZM50 17L56 22L48 23Z" fill="#3c3f48" />
        <path d="M29 17L33 15L34 20Z" fill="#2aa5d8" />
        <ellipse cx="36" cy="18.500" rx="24" ry="6.500" fill="none" stroke="#dedede" strokeWidth="1.500" />
        <path d="M20 30L24 66M34 32L30 50L38 66M52 30L46 52" stroke="#dadada" strokeWidth="2" fill="none" opacity="0.700" />
      </Icon>
    </div>
  );
}

export default function App() {
  return (
    <div className="h-[1600px] w-[2560px] overflow-hidden bg-white">
      <div className="bg-[#07071a]">
        <MenuBar />
        <div className="flex items-start pt-[2px]">
          <div className="w-[2480px] shrink-0">
            <Toolbar />
            <Tabs />
            <Page />
          </div>
          <VideoWindow />
        </div>
      </div>
      <div className="flex h-[90px] bg-gradient-to-b from-[#1a1a1a] to-[#272727]">
        <div className="w-[186px] bg-[#1a2033] bg-[repeating-linear-gradient(55deg,#1b2135_0px,#1b2135_4px,#20273d_6px,#1b2135_8px)]" />
        <div className="w-[84px] border-l-2 border-[#121212]" />
        <Dock />
        <div className="w-[92px] bg-gradient-to-r from-[#161616] to-[#2e2e2e]" />
        <div className="w-[80px] border-l-4 border-[#151515] bg-gradient-to-b from-[#2b2b2b] to-[#414141]" />
        <div className="flex-1 border-l-4 border-[#151515] bg-gradient-to-b from-[#2b2b2b] to-[#444]" />
      </div>
    </div>
  );
}
